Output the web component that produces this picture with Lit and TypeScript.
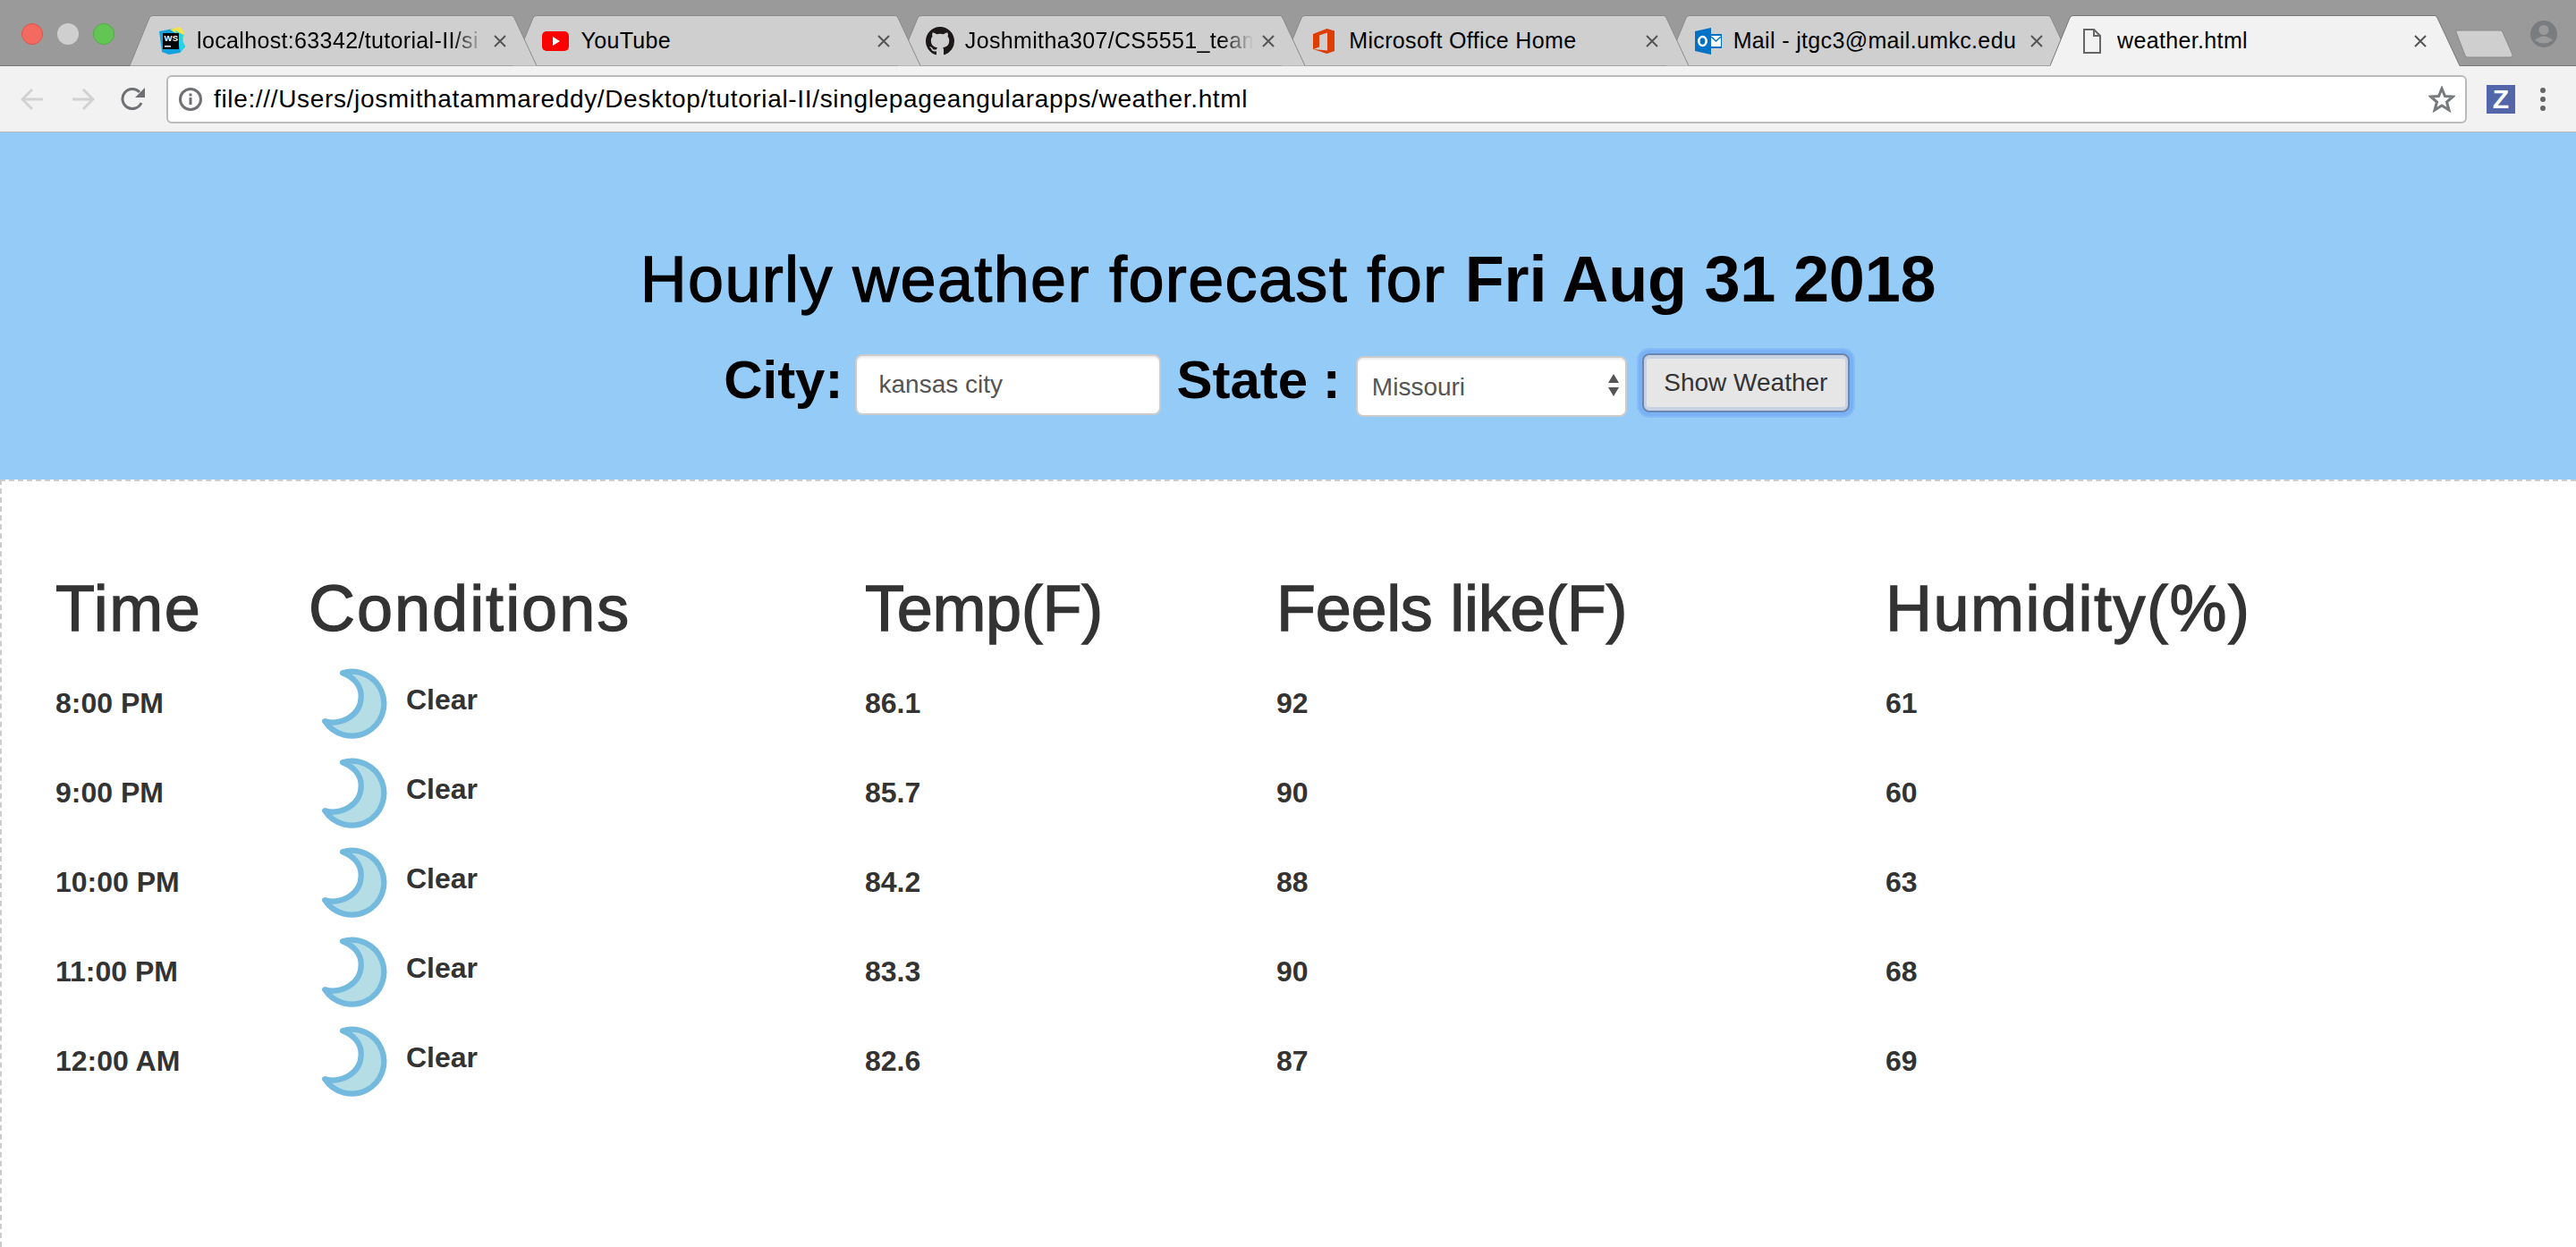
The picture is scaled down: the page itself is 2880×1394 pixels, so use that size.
import { LitElement, html, css, svg } from 'lit';
import { customElement } from 'lit/decorators.js';
import { classMap } from 'lit/directives/class-map.js';

const TAB_W = 455;
const ACTIVE_W = 458;

const moon = html`<svg class="moon" width="75" height="79" viewBox="0 0 72 76">
  <path
    d="M22 5 A34.600 34.600 0 1 1 3 57 C22 62 42 50 42 30 C42 18 33 9 22 5 Z"
    fill="#b5dde6"
    stroke="#74b9de"
    stroke-width="6"
    stroke-linejoin="round"
  />
</svg>`;

const icons = {
  ws: html`<svg width="32" height="32" viewBox="0 0 32 32">
    <path d="M2 5 L18 2 L24 4 L30 8 L28 16 L31 22 L25 29 L13 31 L5 28 Z" fill="#12a3df" />
    <path d="M14 3 L25 0 L30 6 L29 14 L22 8 Z" fill="#f4e64a" />
    <path d="M20 4 L29 9 L28 16 L31 22 L26 28 L24 20 Z" fill="#21d4e8" />
    <rect x="6" y="7" width="18" height="18" fill="#000" />
    <text x="7.500" y="16" font-family="Liberation Sans" font-size="9.500" font-weight="700" fill="#fff">WS</text>
    <rect x="8" y="21" width="7" height="1.500" fill="#fff" />
  </svg>`,
  yt: html`<svg width="30" height="22" viewBox="0 0 30 22">
    <rect width="30" height="22" rx="5" fill="#f00" />
    <path d="M12 6 L20 11 L12 16 Z" fill="#fff" />
  </svg>`,
  gh: html`<svg width="32" height="32" viewBox="0 0 16 16">
    <path
      fill="#1b1817"
      d="M8 0C3.58 0 0 3.58 0 8c0 3.54 2.29 6.53 5.47 7.59.4.07.55-.17.55-.38 0-.19-.01-.82-.01-1.49-2.01.37-2.53-.49-2.69-.94-.09-.23-.48-.94-.82-1.13-.28-.15-.68-.52-.01-.53.63-.01 1.08.58 1.23.82.72 1.21 1.87.87 2.33.66.07-.52.28-.87.51-1.07-1.78-.2-3.64-.89-3.64-3.95 0-.87.31-1.59.82-2.15-.08-.2-.36-1.02.08-2.12 0 0 .67-.21 2.2.82.64-.18 1.32-.27 2-.27.68 0 1.36.09 2 .27 1.53-1.04 2.2-.82 2.2-.82.44 1.1.16 1.92.08 2.12.51.56.82 1.27.82 2.15 0 3.07-1.87 3.75-3.65 3.95.29.25.54.73.54 1.48 0 1.07-.01 1.93-.01 2.2 0 .21.15.46.55.38A8.013 8.013 0 0016 8c0-4.42-3.58-8-8-8z"
    />
  </svg>`,
  office: html`<svg width="24" height="28" viewBox="0 0 24 28">
    <path
      fill-rule="evenodd"
      fill="#dc3e04"
      d="M0 6 L15.500 0 L24 2.500 V25 L15.500 28 L0 23 Z M7 7.500 V20.500 L0.500 23 L16 24.500 V4.500 Z"
    />
  </svg>`,
  outlook: html`<svg width="30" height="30" viewBox="0 0 30 30">
    <rect x="16" y="7" width="14" height="16" fill="#0072c6" />
    <rect x="18" y="9" width="11" height="12" fill="#fff" />
    <path d="M18 10 L23.500 15 L29 10" fill="none" stroke="#0072c6" stroke-width="1.500" />
    <path d="M0 4 L18 0 V30 L0 26 Z" fill="#0072c6" />
    <ellipse cx="8.500" cy="15" rx="4.200" ry="5" fill="none" stroke="#fff" stroke-width="2.600" />
  </svg>`,
  file: html`<svg width="22" height="28" viewBox="0 0 22 28">
    <path d="M2 1 H13 L20 8 V27 H2 Z M13 1 V8 H20" fill="none" stroke="#666" stroke-width="2" />
  </svg>`,
};

interface Tab {
  title: string;
  icon: keyof typeof icons;
  fade?: boolean;
  active?: boolean;
}

const tabs: Tab[] = [
  { title: 'localhost:63342/tutorial-II/si', icon: 'ws', fade: true },
  { title: 'YouTube', icon: 'yt' },
  { title: 'Joshmitha307/CS5551_team', icon: 'gh', fade: true },
  { title: 'Microsoft Office Home', icon: 'office' },
  { title: 'Mail - jtgc3@mail.umkc.edu', icon: 'outlook' },
  { title: 'weather.html', icon: 'file', active: true },
];

const heads = [
  { label: 'Time', tracking: 1.5 },
  { label: 'Conditions', tracking: 2 },
  { label: 'Temp(F)', tracking: -0.3 },
  { label: 'Feels like(F)', tracking: -0.3 },
  { label: 'Humidity(%)', tracking: 1.5 },
];

const hours = [
  { time: '8:00 PM', temp: '86.1', feels: '92', humidity: '61' },
  { time: '9:00 PM', temp: '85.7', feels: '90', humidity: '60' },
  { time: '10:00 PM', temp: '84.2', feels: '88', humidity: '63' },
  { time: '11:00 PM', temp: '83.3', feels: '90', humidity: '68' },
  { time: '12:00 AM', temp: '82.6', feels: '87', humidity: '69' },
];

@customElement('app-root')
export default class AppRoot extends LitElement {
  static styles = css`
    :host {
      display: block;
      height: 1394px;
      overflow: hidden;
      background: #fff;
      font-family: 'Liberation Sans', Arial, sans-serif;
    }

    .strip {
      display: flex;
      align-items: flex-start;
      padding: 17px 0 0 145px;
      box-sizing: content-box;
      height: 56px;
      background: #9a9a9a;
      border-bottom: 1px solid #777;
      position: relative;
    }

    .lights {
      position: absolute;
      left: 24px;
      top: 26px;
      display: flex;
      gap: 16px;
    }

    .light {
      width: 24px;
      height: 24px;
      border-radius: 50%;
      box-sizing: border-box;
    }

    .light--red {
      background: #f46a60;
      border: 1px solid #dc5348;
    }

    .light--grey {
      background: #cfcfcf;
    }

    .light--green {
      background: #63c654;
      border: 1px solid #52ad45;
    }

    .tab {
      position: relative;
      flex: none;
      height: 57px;
      margin-right: -25.600px;
      display: flex;
      align-items: center;
      padding-left: 31px;
      box-sizing: border-box;
      font-size: 25px;
      letter-spacing: 0.35px;
      color: #000;
    }

    .tab__shape {
      position: absolute;
      left: 0;
      top: 0;
    }

    .tab__icon {
      position: relative;
      flex: none;
      width: 32px;
      height: 32px;
      margin-right: 12px;
      display: flex;
      align-items: center;
      justify-content: center;
    }

    .tab__title {
      position: relative;
      flex: none;
      width: 332px;
      white-space: nowrap;
      overflow: hidden;
    }

    .tab__title--fade {
      -webkit-mask-image: linear-gradient(to right, #000 86%, transparent 97%);
      mask-image: linear-gradient(to right, #000 86%, transparent 97%);
    }

    .tab__close {
      position: relative;
      flex: none;
      width: 30px;
      margin-left: -8px;
      display: flex;
      justify-content: center;
    }

    .newtab {
      flex: none;
      margin: 16px 0 0 20px;
    }

    .profile {
      position: absolute;
      right: 21px;
      top: 23px;
    }

    .toolbar {
      display: flex;
      align-items: center;
      height: 73px;
      background: #f2f2f2;
      border-bottom: 1px solid #b9b9b9;
      padding-left: 23px;
    }

    .nav {
      flex: none;
      display: block;
    }

    .omnibox {
      flex: none;
      width: 2572px;
      height: 54px;
      margin-left: 23px;
      box-sizing: border-box;
      display: flex;
      align-items: center;
      background: #fff;
      border: 2px solid #bbb;
      border-radius: 6px;
      padding: 0 11px 0 12px;
      font-size: 28px;
      letter-spacing: 0.66px;
      color: #000;
    }

    .omnibox__url {
      margin-left: 13px;
      flex: 1;
      white-space: nowrap;
    }

    .ext {
      flex: none;
      margin-left: 22px;
      width: 32px;
      height: 32px;
      background: #5366a9;
      color: #fff;
      font-size: 30px;
      font-weight: 700;
      line-height: 32px;
      text-align: center;
    }

    .menu {
      flex: none;
      margin-left: 26px;
    }

    .hero {
      background: #94cbf7;
      height: 388px;
      box-sizing: border-box;
      padding-top: 124px;
      text-align: center;
      color: #000;
    }

    .hero__title {
      margin: 0;
      font-size: 72px;
      font-weight: 400;
      line-height: 80px;
      letter-spacing: 1.35px;
      -webkit-text-stroke: 1.3px #000;
    }

    .hero__title b {
      letter-spacing: -0.2px;
      -webkit-text-stroke: 0;
    }

    .form {
      display: flex;
      justify-content: center;
      align-items: flex-start;
      gap: 17px;
      margin-top: 40px;
      padding-right: 3px;
    }

    .form__label {
      font-size: 60px;
      font-weight: 700;
      line-height: 66px;
      white-space: nowrap;
    }

    .form__label--city {
      margin-right: -3px;
    }

    .field {
      box-sizing: border-box;
      height: 68px;
      background: #fff;
      border: 2px solid #ccc;
      border-radius: 8px;
      box-shadow: inset 0 2px 2px rgba(0, 0, 0, 0.075);
      font: 28px 'Liberation Sans', Arial, sans-serif;
      color: #555;
      outline: none;
    }

    .field--input {
      width: 342px;
      margin-top: 4px;
      padding: 0 24px;
    }

    .select {
      position: relative;
      margin-top: 6px;
    }

    .field--select {
      display: block;
      width: 303px;
      padding: 0 16px;
      appearance: none;
      -webkit-appearance: none;
    }

    .select__arrows {
      position: absolute;
      right: 8px;
      top: 20px;
      pointer-events: none;
    }

    .btn {
      box-sizing: border-box;
      width: 232px;
      height: 66px;
      margin-top: 3px;
      background: #e6e6e6;
      border: 2px solid #6b86b3;
      border-radius: 8px;
      box-shadow: inset 0 4px 0 #c9d2e2, inset 0 -4px 0 #c9d2e2, inset 3px 0 0 #c9d2e2,
        inset -3px 0 0 #c9d2e2, 0 0 0 4px #79b3f5, 0 0 0 6px #86bcf6;
      font: 28px 'Liberation Sans', Arial, sans-serif;
      color: #333;
      padding: 0;
    }

    .forecast {
      height: 858px;
      box-sizing: border-box;
      border-top: 2px dashed #ccc;
      border-left: 2px dashed #ccc;
      padding: 86px 0 0 60px;
      color: #333;
      display: grid;
      grid-template-columns: 283px 622px 460px 681px 1fr;
      grid-template-rows: 112px;
      grid-auto-rows: 100px;
      align-content: start;
      align-items: center;
    }

    .forecast__head {
      font-size: 72px;
      font-weight: 400;
      line-height: 80px;
      white-space: nowrap;
      -webkit-text-stroke: 1.3px #333;
    }

    .forecast__cell {
      font-size: 32px;
      font-weight: 700;
    }

    .conditions {
      display: flex;
      align-items: center;
      padding-left: 15px;
    }

    .conditions__text {
      margin: -7px 0 0 19px;
    }

    .moon {
      flex: none;
      display: block;
    }
  `;

  private renderTab(tab: Tab, index: number) {
    const width = tab.active ? ACTIVE_W : TAB_W;
    const fill = tab.active ? '#f2f2f2' : '#cfcfcf';
    const zIndex = tab.active ? 10 : tabs.length - index;
    return html`<div class="tab" style="width:${width}px;z-index:${zIndex}">
      <svg class="tab__shape" width=${width} height="57" viewBox="0 0 ${width} 57">
        ${svg`<path d="M0 56.500 L22 3 Q23 0.500 26 0.500 H${width - 28} Q${width - 26} 0.500 ${width - 25} 3 L${width} 56.500 ${tab.active ? 'V57 H0' : 'Z'}" fill=${fill} />
        <path d="M0 56.500 L22 3 Q23 0.500 26 0.500 H${width - 28} Q${width - 26} 0.500 ${width - 25} 3 L${width} 56.500" fill="none" stroke=${tab.active ? '#777' : '#8a8a8a'} />`}
      </svg>
      <div class="tab__icon">${icons[tab.icon]}</div>
      <div class=${classMap({ tab__title: true, 'tab__title--fade': !!tab.fade })}>${tab.title}</div>
      <div class="tab__close">
        <svg width="14" height="14" viewBox="0 0 14 14">
          <path d="M1 1 L13 13 M13 1 L1 13" stroke="#555" stroke-width="2" />
        </svg>
      </div>
    </div>`;
  }

  render() {
    return html`
      <div class="strip">
        <div class="lights">
          <div class="light light--red"></div>
          <div class="light light--grey"></div>
          <div class="light light--green"></div>
        </div>
        ${tabs.map((tab, i) => this.renderTab(tab, i))}
        <svg class="newtab" width="66" height="32" viewBox="0 0 66 32">
          <path
            d="M2 3 Q1 1 4 1 H51 Q53 1 54 3 L65 28 Q66 31 63 31 H15 Q13 31 12 29 Z"
            fill="#cfcfcf"
            stroke="#8a8a8a"
          />
        </svg>
        <svg class="profile" width="30" height="30" viewBox="0 0 30 30">
          <circle cx="15" cy="15" r="15" fill="#7a7d80" />
          <circle cx="15" cy="10.500" r="5.500" fill="#9a9a9a" />
          <path d="M5 22 Q15 13 25 22 Q15 29 5 22 Z" fill="#9a9a9a" />
        </svg>
      </div>

      <div class="toolbar">
        <svg class="nav" width="26" height="26" viewBox="0 0 26 26">
          <path d="M25 13 H3 M13 2 L2 13 L13 24" fill="none" stroke="#d2d2d2" stroke-width="3" />
        </svg>
        <svg class="nav" style="margin-left:31px" width="26" height="26" viewBox="0 0 26 26">
          <path d="M1 13 H23 M13 2 L24 13 L13 24" fill="none" stroke="#d2d2d2" stroke-width="3" />
        </svg>
        <svg class="nav" style="margin-left:29px" width="28" height="28" viewBox="0 0 28 28">
          <path d="M23 18 A11 11 0 1 1 21 6" fill="none" stroke="#6e7073" stroke-width="3" />
          <path d="M27 1 V12 H16 Z" fill="#6e7073" />
        </svg>
        <div class="omnibox">
          <svg width="26" height="26" viewBox="0 0 26 26">
            <circle cx="13" cy="13" r="11.500" fill="none" stroke="#6e7073" stroke-width="3" />
            <rect x="11.500" y="11" width="3" height="8" fill="#6e7073" />
            <rect x="11.500" y="6.500" width="3" height="3" fill="#6e7073" />
          </svg>
          <span class="omnibox__url"
            >file:///Users/josmithatammareddy/Desktop/tutorial-II/singlepageangularapps/weather.html</span
          >
          <svg width="30" height="30" viewBox="0 0 30 30">
            <path
              d="M15 3 L18.500 11.500 L27.500 12 L20.500 18 L23 27 L15 22 L7 27 L9.500 18 L2.500 12 L11.500 11.500 Z"
              fill="none"
              stroke="#777a7d"
              stroke-width="3"
            />
          </svg>
        </div>
        <div class="ext">Z</div>
        <svg class="menu" width="10" height="32" viewBox="0 0 10 32">
          <circle cx="5" cy="6" r="3" fill="#666" />
          <circle cx="5" cy="16" r="3" fill="#666" />
          <circle cx="5" cy="26" r="3" fill="#666" />
        </svg>
      </div>

      <div class="hero">
        <h1 class="hero__title">Hourly weather forecast for <b>Fri Aug 31 2018</b></h1>
        <div class="form">
          <div class="form__label form__label--city">City:</div>
          <input class="field field--input" .value=${'kansas city'} />
          <div class="form__label">State :</div>
          <div class="select">
            <select class="field field--select">
              <option>Missouri</option>
            </select>
            <svg class="select__arrows" width="14" height="26" viewBox="0 0 14 26">
              <path d="M7 0 L13 10 H1 Z M1 15 H13 L7 25 Z" fill="#555" />
            </svg>
          </div>
          <button class="btn">Show Weather</button>
        </div>
      </div>

      <div class="forecast">
        ${heads.map(
          (head) => html`<div class="forecast__head" style="letter-spacing:${head.tracking}px">${head.label}</div>`,
        )}
        ${hours.map(
          (hour) => html`
            <div class="forecast__cell">${hour.time}</div>
            <div class="forecast__cell conditions">
              ${moon}
              <span class="conditions__text">Clear</span>
            </div>
            <div class="forecast__cell">${hour.temp}</div>
            <div class="forecast__cell">${hour.feels}</div>
            <div class="forecast__cell">${hour.humidity}</div>
          `,
        )}
      </div>
    `;
  }
}
